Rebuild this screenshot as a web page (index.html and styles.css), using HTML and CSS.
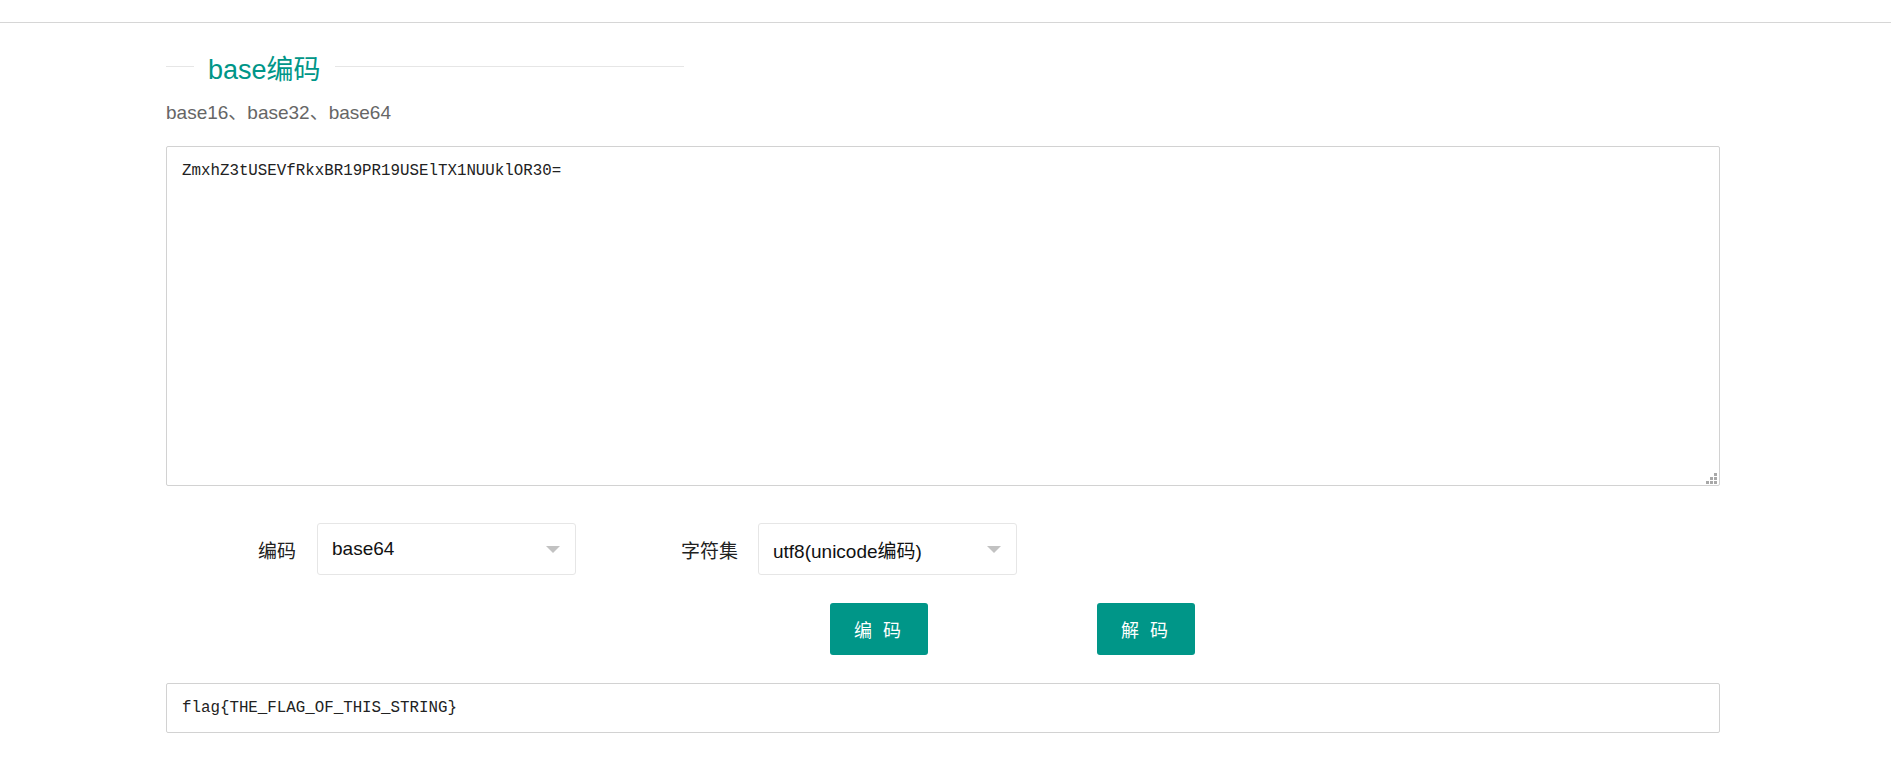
FILE: index.html
```html
<!DOCTYPE html>
<html>
<head>
  <meta charset="utf-8">
  <title>base编码</title>
  <link rel="stylesheet" href="styles.css">
</head>

<body>
  <div class="topbar"></div>

  <div class="main">
    <div class="field-title">
      <h2>base编码</h2>
    </div>
    <p class="desc">base16、base32、base64</p>

    <div class="editor">
      <textarea id="source" class="source">ZmxhZ3tUSEVfRkxBR19PR19USElTX1NUUklOR30=</textarea>
      <svg class="grip" width="11" height="11" viewBox="0 0 11 11">
        <rect x="8" y="0" width="3" height="3"/>
        <rect x="4" y="4" width="3" height="3"/>
        <rect x="8" y="4" width="3" height="3"/>
        <rect x="0" y="8" width="3" height="3"/>
        <rect x="4" y="8" width="3" height="3"/>
        <rect x="8" y="8" width="3" height="3"/>
      </svg>
    </div>

    <div class="form-row">
      <label class="form-label">编码</label>
      <div class="select">
        <span>base64</span>
        <i class="edge"></i>
      </div>
      <label class="form-label second">字符集</label>
      <div class="select">
        <span>utf8(unicode编码)</span>
        <i class="edge"></i>
      </div>
    </div>

    <div class="btn-row">
      <button type="button" class="btn">编 码</button>
      <button type="button" class="btn">解 码</button>
    </div>

    <input type="text" class="result" value="flag{THE_FLAG_OF_THIS_STRING}">
  </div>
</body>
</html>
```

FILE: styles.css
```css
body {
  margin: 0;
  padding: 0;
  background: #fff;
  font-family: "Liberation Sans", "Noto Sans CJK SC", sans-serif;
  color: #222;
}
.topbar {
  height: 22px;
  border-bottom: 1px solid #d6d6d6;
}
.main {
  width: 1554px;
  margin-left: 166px;
}
.field-title {
  display: flex;
  align-items: center;
  width: 518px;
  height: 32px;
  margin-top: 27px;
}
.field-title::before {
  content: '';
  width: 28px;
  border-top: 1px solid #e6e6e6;
}
.field-title::after {
  content: '';
  flex: 1;
  border-top: 1px solid #e6e6e6;
}
.field-title h2 {
  margin: 0 14px;
  padding-top: 7px;
  font-size: 27px;
  font-weight: normal;
  line-height: 32px;
  color: #009688;
}
.desc {
  margin: 20px 0 0;
  font-size: 19px;
  line-height: 22px;
  color: #666;
}
.editor {
  position: relative;
  margin-top: 22px;
  height: 340px;
}
.source {
  display: block;
  width: 100%;
  height: 340px;
  box-sizing: border-box;
  margin: 0;
  padding: 12px 15px;
  border: 1px solid #d2d2d2;
  border-radius: 2px;
  resize: none;
  outline: none;
  font-family: "Liberation Mono", monospace;
  font-size: 15.8px;
  line-height: 24px;
  color: #222;
}
.grip {
  position: absolute;
  right: 3px;
  bottom: 2px;
  fill: #a8a8a8;
}
.form-row {
  display: flex;
  align-items: center;
  margin-top: 37px;
  height: 52px;
}
.form-label {
  width: 130px;
  padding-right: 21px;
  text-align: right;
  font-size: 19px;
  color: #222;
}
.form-label.second {
  width: 131px;
  padding-right: 20px;
  margin-left: 31px;
}
.select {
  display: flex;
  align-items: center;
  justify-content: space-between;
  width: 259px;
  height: 52px;
  box-sizing: border-box;
  padding: 0 15px 0 14px;
  border: 1px solid #e6e6e6;
  border-radius: 3px;
  background: #fff;
  font-size: 19px;
  color: #111;
}
.edge {
  width: 0;
  height: 0;
  border-style: solid;
  border-width: 7px 7px 0;
  border-color: #c2c2c2 transparent transparent;
}
.btn-row {
  display: flex;
  gap: 169px;
  margin-top: 28px;
  padding-left: 664px;
}
.btn {
  width: 98px;
  height: 52px;
  padding: 0;
  border: none;
  border-radius: 3px;
  background: #009688;
  color: #fff;
  font-family: "Liberation Sans", "Noto Sans CJK SC", sans-serif;
  font-size: 18px;
  letter-spacing: 3px;
  cursor: pointer;
}
.btn:hover {
  opacity: 0.8;
}
.result {
  display: block;
  width: 100%;
  height: 50px;
  box-sizing: border-box;
  margin-top: 28px;
  padding: 0 15px;
  border: 1px solid #d2d2d2;
  border-radius: 2px;
  outline: none;
  font-family: "Liberation Mono", monospace;
  font-size: 15.8px;
  color: #222;
}
```
